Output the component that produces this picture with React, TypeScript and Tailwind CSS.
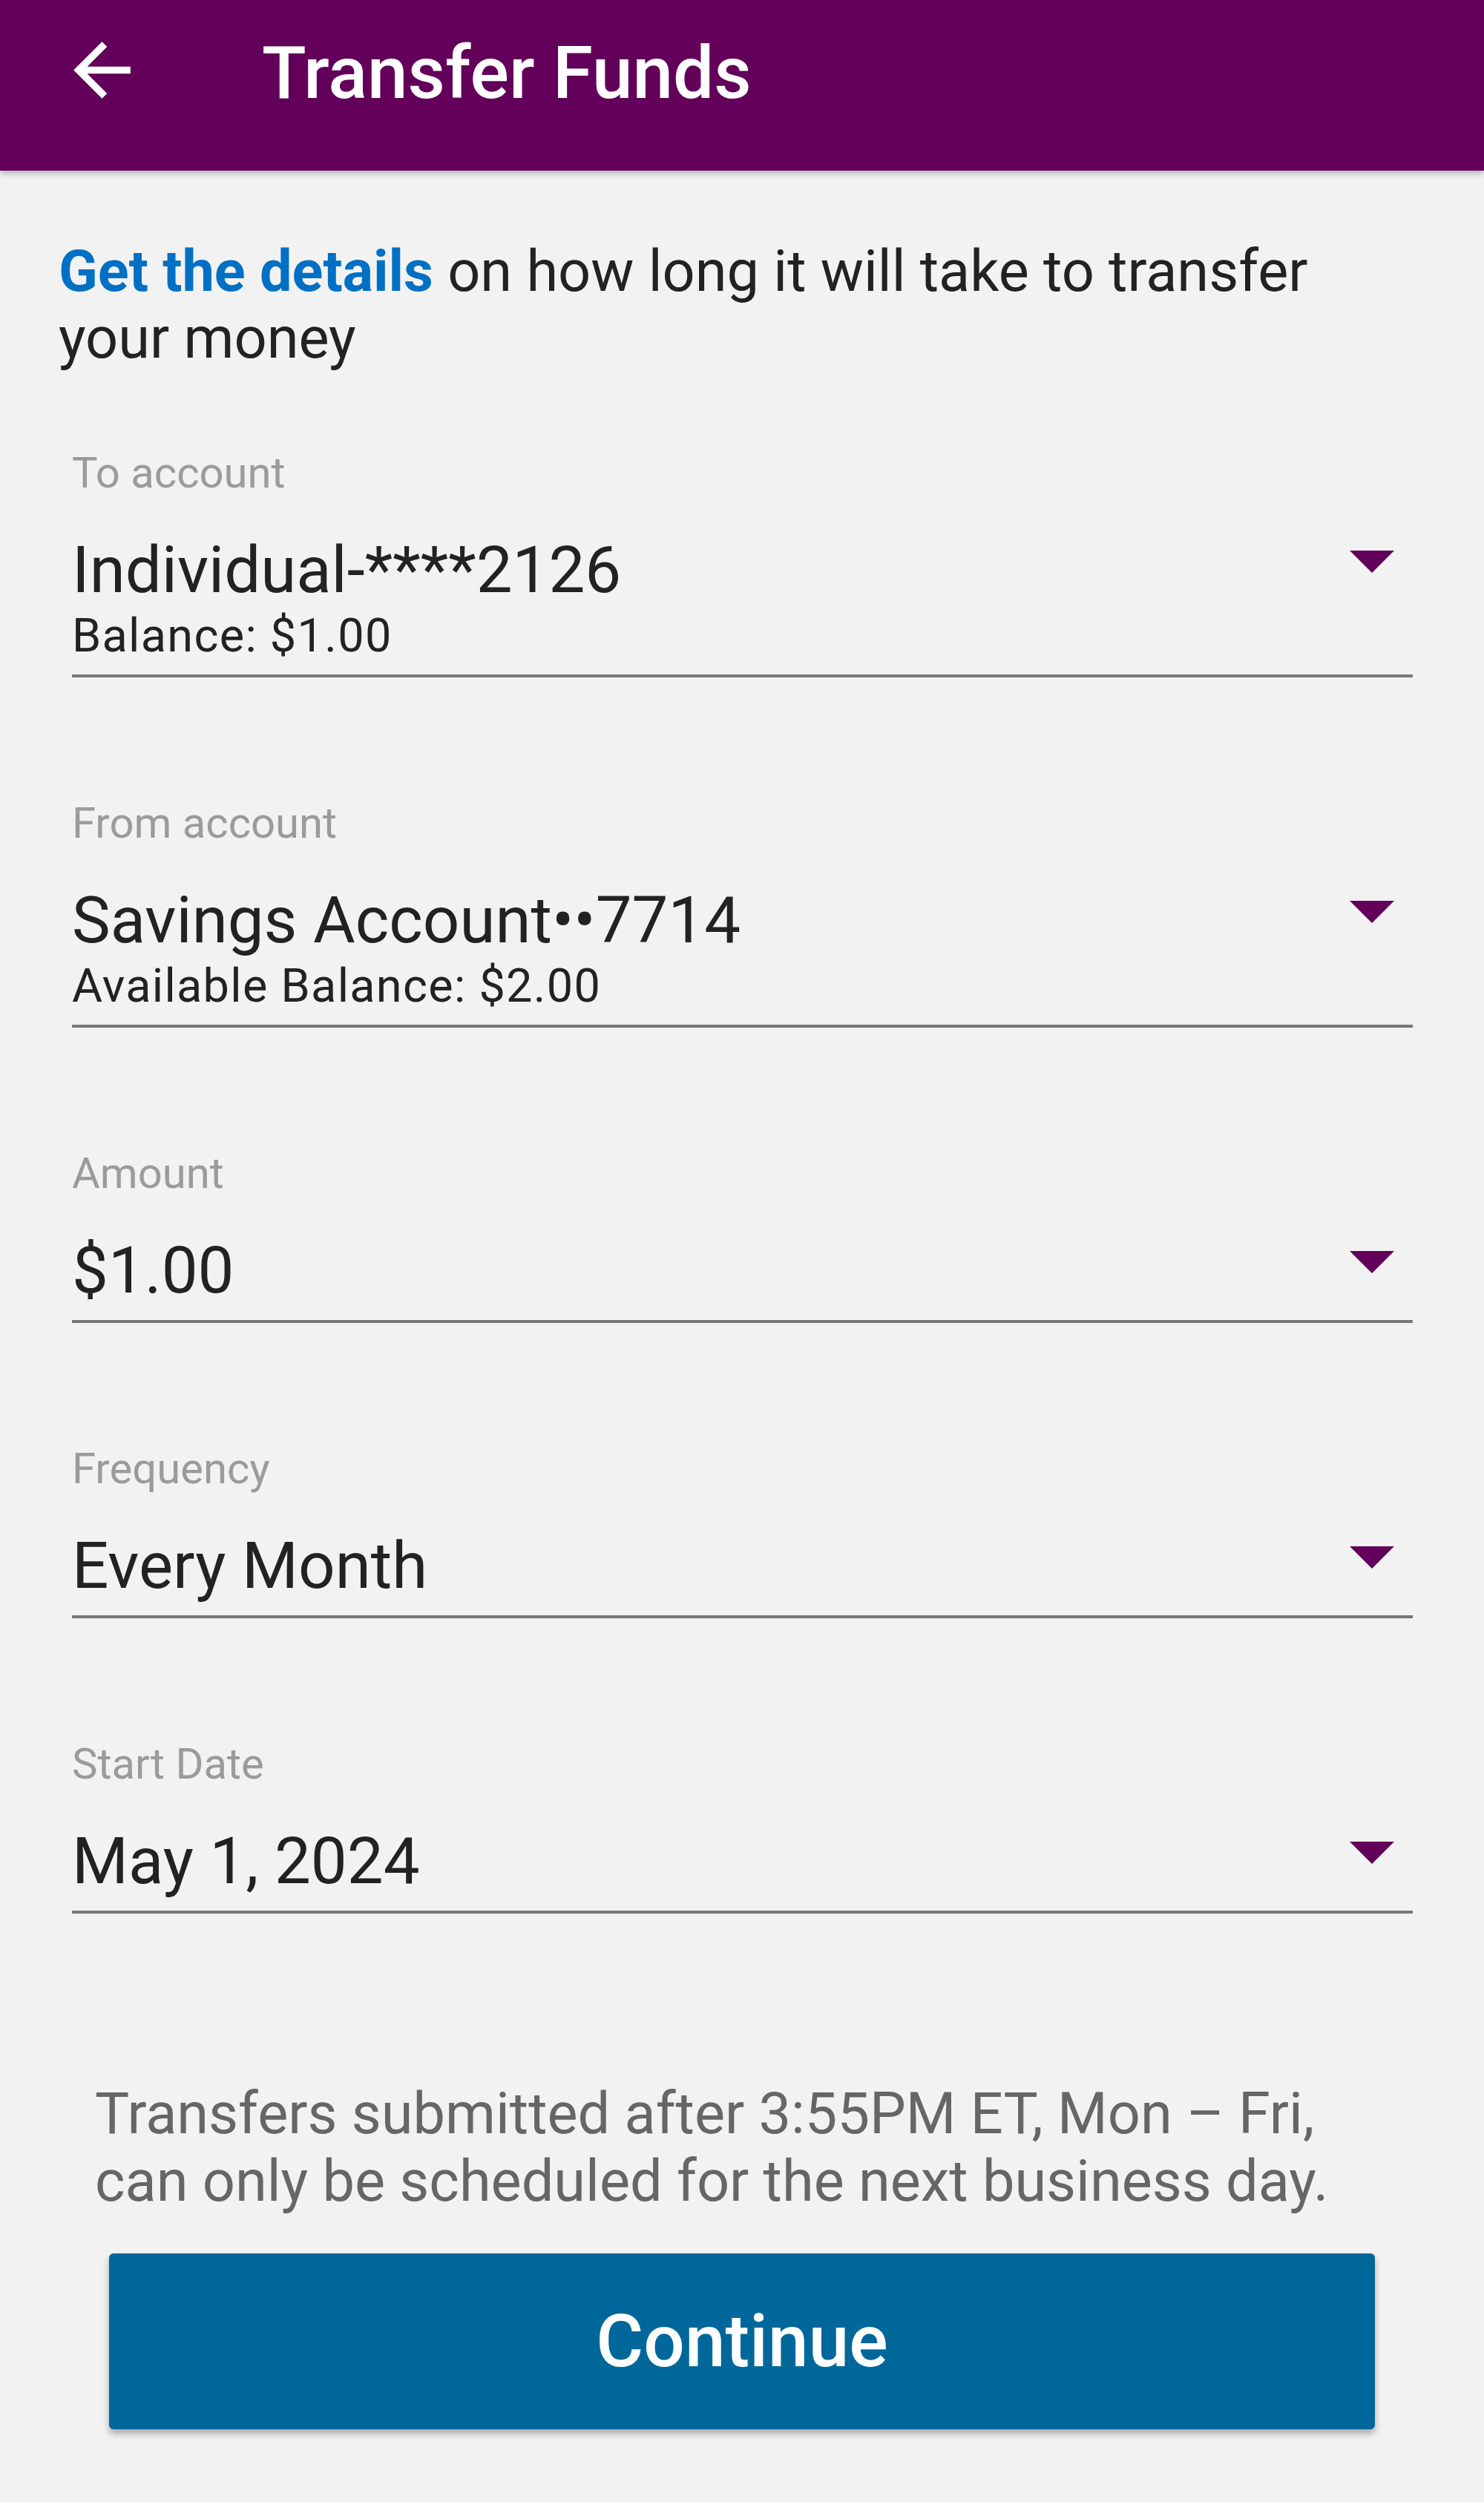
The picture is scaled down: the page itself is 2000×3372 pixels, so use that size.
import React from 'react';

interface FieldProps {
  label: string;
  value: string;
  sub?: string;
  first?: boolean;
}

function BackArrow() {
  return (
    <svg viewBox="0 0 24 24" className="w-[115px] h-[115px]" fill="#ffffff">
      <path d="M20 11H7.83l5.59-5.59L12 4l-8 8 8 8 1.41-1.41L7.83 13H20v-2z" />
    </svg>
  );
}

function SelectField({ label, value, sub, first }: FieldProps) {
  return (
    <div className={first ? 'mt-[101px]' : 'mt-[161px]'}>
      <div className="text-[58px] leading-[70px] text-[#9b9b9b]">{label}</div>
      <div className="mt-[46px] flex items-start justify-between border-b-[4px] border-[#777777] pb-[17px]">
        <div>
          <div className="text-[87px] leading-[100px] text-[#222222] whitespace-nowrap">{value}</div>
          {sub && (
            <div className="mt-[4px] text-[63px] leading-[70px] tracking-[1.3px] text-[#222222] whitespace-nowrap">{sub}</div>
          )}
        </div>
        <div className="mt-[24px] mr-[25px] w-0 h-0 border-l-[30px] border-r-[30px] border-t-[30px] border-l-transparent border-r-transparent border-t-[#62005a]" />
      </div>
    </div>
  );
}

export default function App() {
  const fields: FieldProps[] = [
    { label: 'To account', value: 'Individual-****2126', sub: 'Balance: $1.00', first: true },
    { label: 'From account', value: 'Savings Account\u2022\u20227714', sub: 'Available Balance: $2.00' },
    { label: 'Amount', value: '$1.00' },
    { label: 'Frequency', value: 'Every Month' },
    { label: 'Start Date', value: 'May 1, 2024' },
  ];

  return (
    <div className="min-h-screen bg-[#f2f2f2] font-['Roboto','Liberation_Sans',sans-serif]">
      {/* App bar */}
      <header className="relative h-[230px] bg-[#62005a] shadow-[0_4px_8px_rgba(0,0,0,0.25)] flex items-start">
        <button className="ml-[80px] mt-[37px] shrink-0">
          <BackArrow />
        </button>
        <h1 className="ml-[158px] mt-[50px] text-[98px] leading-[98px] font-medium text-white whitespace-nowrap">
          Transfer Funds
        </h1>
      </header>

      <div className="pl-[79px] pr-[80px] mt-[91px] text-[77.5px] leading-[90px] text-[#222222]">
        <a className="font-bold text-[#0070c4]">Get the details</a> on how long it will take to transfer
        <br />
        your money
      </div>

      <div className="pl-[97px] pr-[96px]">
        {fields.map((f) => (
          <SelectField key={f.label} {...f} />
        ))}
      </div>

      <p className="mt-[224px] pl-[128px] pr-[100px] text-[77.5px] leading-[91px] text-[#666666] whitespace-nowrap">
        Transfers submitted after 3:55PM ET, Mon – Fri,
        <br />
        can only be scheduled for the next business day.
      </p>

      <div className="px-[147px] mt-[52px] pb-[99px]">
        <button className="w-full h-[237px] rounded-[6px] bg-[#00679a] shadow-[0_6px_10px_rgba(0,0,0,0.3)] flex items-center justify-center text-[98px] leading-[98px] font-medium text-white">
          Continue
        </button>
      </div>
    </div>
  );
}
